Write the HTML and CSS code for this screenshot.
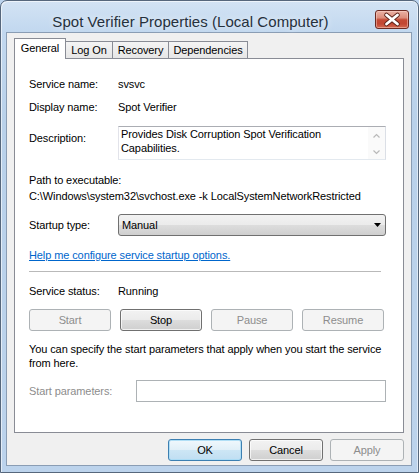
FILE: index.html
```html
<!DOCTYPE html>
<html lang="en">
<head>
    <meta charset="UTF-8">
    <title>Spot Verifier Properties (Local Computer)</title>
    <link rel="stylesheet" href="styles.css">
</head>
<body>
    <div class="window">
        <div class="titlebar">
            <div class="title">Spot Verifier Properties (Local Computer)</div>
            <div class="close-btn">
                <svg width="32" height="17" viewBox="0 0 32 17">
                    <path d="M10.5 4 L21.5 13 M21.5 4 L10.5 13" stroke="#5b2219" stroke-width="4.6" stroke-linecap="round"/>
                    <path d="M10.5 4 L21.5 13 M21.5 4 L10.5 13" stroke="#ffffff" stroke-width="2.8" stroke-linecap="round"/>
                </svg>
            </div>
        </div>

        <div class="client">
            <div class="tabs">
                <div class="tab active tab-general">General</div>
                <div class="tab tab-logon">Log On</div>
                <div class="tab tab-recovery">Recovery</div>
                <div class="tab tab-deps">Dependencies</div>
            </div>

            <div class="panel">
                <div class="field field-first">
                    <span class="label">Service name:</span>
                    <span>svsvc</span>
                </div>
                <div class="field field-display">
                    <span class="label">Display name:</span>
                    <span>Spot Verifier</span>
                </div>
                <div class="field field-desc">
                    <span class="label label-top">Description:</span>
                    <div class="desc-box">
                        <div class="desc-text">Provides Disk Corruption Spot Verification Capabilities.</div>
                        <div class="scrollbar">
                            <svg width="17" height="32" viewBox="0 0 17 32">
                                <path d="M5.5 10.5 L8.5 7.5 L11.5 10.5" fill="none" stroke="#b9b9b9" stroke-width="1.2"/>
                                <path d="M5.5 23.5 L8.5 26.5 L11.5 23.5" fill="none" stroke="#b9b9b9" stroke-width="1.2"/>
                            </svg>
                        </div>
                    </div>
                </div>

                <div class="path-label">Path to executable:</div>
                <div class="path-value">C:\Windows\system32\svchost.exe -k LocalSystemNetworkRestricted</div>

                <div class="field field-startup">
                    <span class="label">Startup type:</span>
                    <div class="select">
                        <span>Manual</span>
                        <svg width="7" height="4" viewBox="0 0 7 4"><path d="M0 0 H7 L3.5 4 Z" fill="#000"/></svg>
                    </div>
                </div>

                <a class="help-link" href="#">Help me configure service startup options.</a>

                <div class="separator"></div>

                <div class="field field-status">
                    <span class="label">Service status:</span>
                    <span>Running</span>
                </div>

                <div class="service-buttons">
                    <button class="btn" disabled>Start</button>
                    <button class="btn">Stop</button>
                    <button class="btn" disabled>Pause</button>
                    <button class="btn" disabled>Resume</button>
                </div>

                <p class="note">You can specify the start parameters that apply when you start the service<br>from here.</p>

                <div class="field field-params">
                    <span class="label label-params disabled-text">Start parameters:</span>
                    <input type="text" class="params-input" disabled>
                </div>
            </div>

            <div class="dialog-buttons">
                <button class="btn btn-dlg btn-default">OK</button>
                <button class="btn btn-dlg">Cancel</button>
                <button class="btn btn-dlg" disabled>Apply</button>
            </div>
        </div>
    </div>
</body>
</html>
```

FILE: styles.css
```css
html, body { margin: 0; padding: 0; }
body { font-family: "Segoe UI", "Liberation Sans", Arial, sans-serif; font-size: 11px; letter-spacing: -0.1px; color: #000; background: #bcd4ee; }

.window { width: 419px; height: 473px; box-sizing: border-box; overflow: hidden; border: 1px solid #56677c; border-radius: 7px 7px 0 0; padding: 0 6px 0 5px; background: linear-gradient(to bottom, #d3e3f4 0px, #c2d8ef 30px, #b9d1ea 120px, #bcd3ec 473px); box-shadow: inset 1px 1px 0 rgba(255,255,255,0.6), inset -1px 0 0 rgba(255,255,255,0.5); }

.titlebar { height: 31px; display: flex; }
.title { flex: 1; text-align: center; padding-top: 11px; line-height: 20px; font-size: 15px; letter-spacing: 0.05px; color: #25303c; text-shadow: 0 0 6px rgba(255,255,255,0.9); }
.close-btn { align-self: flex-start; margin-top: 9px; margin-right: 3px; width: 32px; height: 17px; border: 1px solid #6b2a22; border-radius: 3px; background: linear-gradient(to bottom, #eab2a5 0%, #dc8d7c 40%, #c44a35 52%, #c24733 75%, #d46a52 100%); box-shadow: inset 0 0 0 1px rgba(255,220,210,0.45); }
.close-btn svg { display: block; }

.client { background: #f0f0f0; border: 1px solid #8a9db4; padding: 5px 0 4px 0; }

.tabs { display: flex; align-items: flex-end; height: 20px; margin-left: 7px; }
.tab { box-sizing: border-box; height: 17px; line-height: 16px; text-align: center; border: 1px solid #898c95; border-bottom: none; margin-left: -1px; background: linear-gradient(to bottom, #f4f4f4, #e6e6e6); }
.tab.active { height: 21px; line-height: 19px; margin-left: 0; margin-bottom: -1px; background: #fff; position: relative; z-index: 1; }
.tab-general { width: 52px; }
.tab-logon { width: 48px; }
.tab-recovery { width: 57px; }
.tab-deps { width: 80px; }

.panel { height: 375px; box-sizing: border-box; margin: 0 7px; border: 1px solid #898c95; background: #fff; padding: 17px 17px 0 14px; display: flex; flex-direction: column; line-height: 16px; }

.field { display: flex; align-items: center; }
.label { width: 89px; flex-shrink: 0; }
.label-top { align-self: flex-start; padding-top: 4px; }
.field-display { margin-top: 7px; }
.field-desc { margin-top: 11px; }
.field-startup { margin-top: 10px; }
.field-status { margin-top: 11px; }
.field-params { margin-top: 10px; }
.label-params { width: 107px; }
.disabled-text { color: #8d8d8d; }

.desc-box { flex: 1; height: 34px; box-sizing: border-box; display: flex; border: 1px solid #abadb3; border-color: #abadb3 #dbdfe6 #e3e9ef #e2e3ea; }
.desc-text { flex: 1; padding: 0 2px; line-height: 14px; }
.scrollbar { width: 17px; background: #fafafa; }
.scrollbar svg { display: block; }

.path-label { margin-top: 12px; }

.select { flex: 1; height: 22px; box-sizing: border-box; display: flex; align-items: center; justify-content: space-between; padding: 0 4px 0 3px; border: 1px solid #707070; border-radius: 3px; background: linear-gradient(to bottom, #f2f2f2 0%, #ebebeb 50%, #dddddd 50%, #cfcfcf 100%); }

.help-link { margin-top: 11px; color: #0066cc; text-decoration: underline; align-self: flex-start; }

.separator { margin-top: 8px; margin-right: 5px; height: 0; border-top: 1px solid #b9b9b9; }

.service-buttons { display: flex; gap: 9px; margin-top: 10px; }
.btn { font: inherit; letter-spacing: inherit; color: #000; width: 82px; height: 22px; padding: 0; border: 1px solid #707070; border-radius: 3px; background: linear-gradient(to bottom, #f2f2f2 0%, #ebebeb 50%, #dddddd 50%, #cfcfcf 100%); box-shadow: inset 0 0 0 1px rgba(255,255,255,0.7); }
.btn:disabled { color: #8d8d8d; border-color: #adb2b5; background: #f4f4f4; box-shadow: none; }

.note { margin: 11px 0 0 0; line-height: 14px; }

.params-input { flex: 1; height: 22px; box-sizing: border-box; margin: 0; border: 1px solid #adb2b5; background: #fff; }

.dialog-buttons { display: flex; justify-content: flex-end; gap: 7px; margin-top: 6px; padding-right: 7px; }
.btn-dlg { width: 74px; }
.btn-default { border-color: #3c7fb1; background: linear-gradient(to bottom, #f0f8fd 0%, #e0eff8 50%, #cde6f5 50%, #c0def2 100%); box-shadow: inset 0 0 0 1px rgba(170,220,245,0.9); }
```
